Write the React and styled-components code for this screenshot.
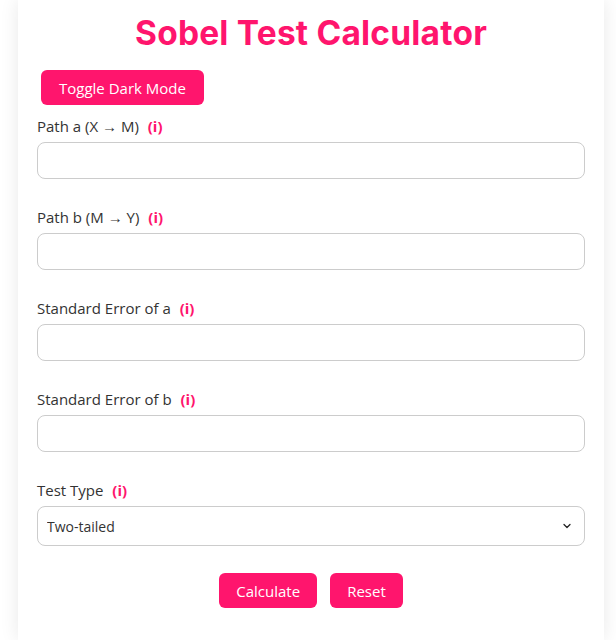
import styled, { createGlobalStyle } from 'styled-components'
import { ChevronDown } from 'lucide-react'

const GlobalStyle = createGlobalStyle`
    body {
        margin: 0;
        background: #ffffff;
        font-family: "Open Sans", "Noto Sans", sans-serif;
    }
`

const pink = '#ff156d'

const Card = styled.div`
    margin-left: 18px;
    width: 586px;
    min-height: 640px;
    box-sizing: border-box;
    padding: 12px 19px 20px;
    background: #fff;
    box-shadow: 0 0 18px rgba(0, 0, 0, 0.09);
`

const Title = styled.h1`
    margin: 0;
    text-align: center;
    font-family: Inter, "Liberation Sans", sans-serif;
    font-weight: 700;
    font-size: 33.5px;
    line-height: 42px;
    color: ${pink};
    letter-spacing: 0.2px;
`

const PinkButton = styled.button`
    height: 35px;
    padding: 0 ${p => p.$pad || 17}px;
    border: none;
    border-radius: 6px;
    background: ${pink};
    color: #fff;
    font-family: "Open Sans", "Noto Sans", sans-serif;
    font-size: 15px;
    cursor: pointer;
`

const ToggleButton = styled(PinkButton)`
    margin: 16px 0 0 4px;
    display: block;
`

const Field = styled.div`
    margin-top: ${p => p.$first ? 11 : 28}px;
    display: flex;
    flex-direction: column;
    gap: 5px;
`

const Label = styled.label`
    font-size: 15px;
    line-height: 21px;
    color: #333;

    & .info {
        color: ${pink};
        font-weight: 700;
        margin-left: 5px;
    }
`

const TextInput = styled.input`
    height: 37px;
    box-sizing: border-box;
    border: 1px solid #ccc;
    border-radius: 8px;
    padding: 0 10px;
    font-size: 14px;
`

const SelectWrap = styled.div`
    position: relative;
    display: flex;

    & svg {
        position: absolute;
        right: 12px;
        top: 14px;
        pointer-events: none;
        color: #222;
    }
`

const Select = styled.select`
    flex: 1;
    height: 40px;
    box-sizing: border-box;
    border: 1px solid #ccc;
    border-radius: 8px;
    padding: 0 9px;
    background: #fff;
    color: #333;
    font-family: "Open Sans", "Noto Sans", sans-serif;
    font-size: 14px;
    appearance: none;
`

const Actions = styled.div`
    margin-top: 27px;
    display: flex;
    justify-content: center;
    gap: 13px;
`

const fields = [
    'Path a (X → M)',
    'Path b (M → Y)',
    'Standard Error of a',
    'Standard Error of b',
]

export default function App() {
    return (
        <>
            <GlobalStyle />
            <Card>
                <Title>Sobel Test Calculator</Title>
                <ToggleButton $pad={18}>Toggle Dark Mode</ToggleButton>
                {fields.map((f, i) => (
                    <Field key={f} $first={i === 0}>
                        <Label>{f} <span className='info'>(i)</span></Label>
                        <TextInput type='number' />
                    </Field>
                ))}
                <Field>
                    <Label>Test Type <span className='info'>(i)</span></Label>
                    <SelectWrap>
                        <Select defaultValue='two'>
                            <option value='two'>Two-tailed</option>
                            <option value='one'>One-tailed</option>
                        </Select>
                        <ChevronDown size={12} strokeWidth={2.5} />
                    </SelectWrap>
                </Field>
                <Actions>
                    <PinkButton>Calculate</PinkButton>
                    <PinkButton>Reset</PinkButton>
                </Actions>
            </Card>
        </>
    )
}
